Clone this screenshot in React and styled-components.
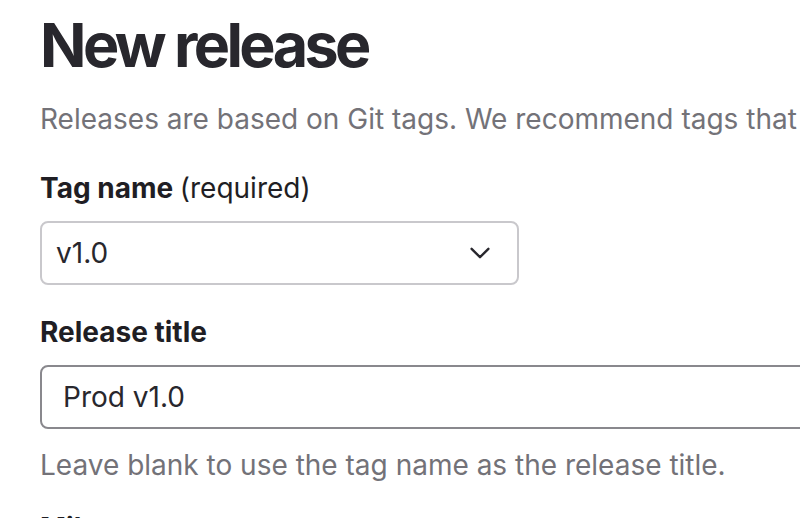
import React from "react";
import styled, { createGlobalStyle } from "styled-components";

const GlobalStyle = createGlobalStyle`
  html, body {
    margin: 0;
    padding: 0;
    background: #ffffff;
    overflow: hidden;
  }
  body {
    font-family: Inter, "Noto Sans", "Liberation Sans", sans-serif;
    color: #28272d;
  }
`;

export default function App() {
  return (
    <>
      <GlobalStyle />
      <Page>
        <Title>New release</Title>
        <Lead>
          Releases are based on Git tags. We recommend tags that use semantic
          versioning, for example 1.0.0, 2.1.0-pre.
        </Lead>

        <FormGroup $top={29}>
          <Label>
            Tag name <Optional>(required)</Optional>
          </Label>
          <SelectBox>
            <span>v1.0</span>
            <Chevron viewBox="0 0 16 16" aria-hidden="true">
              <path d="M2.4 5.2 8 10.8l5.6-5.6" />
            </Chevron>
          </SelectBox>
        </FormGroup>

        <FormGroup $top={27}>
          <Label>Release title</Label>
          <TextInput defaultValue="Prod v1.0" />
          <Help>Leave blank to use the tag name as the release title.</Help>
        </FormGroup>

        <FormGroup $top={23}>
          <Label>Milestones</Label>
        </FormGroup>
      </Page>
    </>
  );
}

const Page = styled.main`
  width: 1100px;
  padding: 0 0 0 40px;
  display: flex;
  flex-direction: column;
`;

const Title = styled.h1`
  margin: 7px 0 0;
  font-size: 61px;
  line-height: 76px;
  font-weight: 700;
  letter-spacing: -3.6px;
  color: #28272d;
`;

const Lead = styled.p`
  margin: 16px 0 0;
  font-size: 28px;
  line-height: 40px;
  color: #737278;
  white-space: nowrap;
`;

const FormGroup = styled.div`
  display: flex;
  flex-direction: column;
  margin-top: ${(p) => p.$top}px;
`;

const Label = styled.label`
  font-size: 28px;
  line-height: 40px;
  font-weight: 700;
  color: #1f1e24;
  margin-bottom: 13px;
`;

const Optional = styled.span`
  font-weight: 400;
`;

const SelectBox = styled.div`
  box-sizing: border-box;
  width: 479px;
  height: 64px;
  display: flex;
  align-items: center;
  justify-content: space-between;
  padding: 0 25px 0 14px;
  border: 2px solid #c9c8cc;
  border-radius: 8px;
  font-size: 28px;
  color: #28272d;
`;

const Chevron = styled.svg`
  width: 24px;
  height: 24px;
  fill: none;
  stroke: #28272d;
  stroke-width: 1.6;
  stroke-linecap: round;
  stroke-linejoin: round;
`;

const TextInput = styled.input`
  box-sizing: border-box;
  width: 900px;
  height: 64px;
  padding: 0 21px;
  border: 2px solid #89888d;
  border-radius: 8px;
  font-family: inherit;
  font-size: 28px;
  color: #28272d;
  outline: none;
`;

const Help = styled.p`
  margin: 16px 0 0;
  font-size: 28px;
  line-height: 40px;
  color: #737278;
`;
